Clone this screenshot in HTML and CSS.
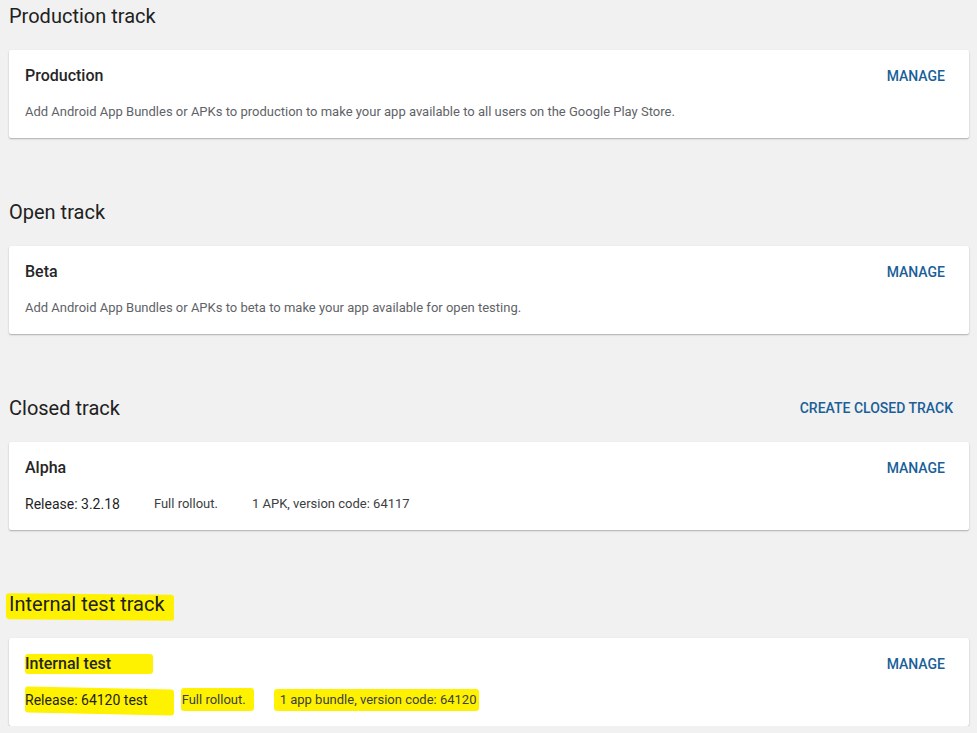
FILE: index.html
```html
<!DOCTYPE html>
<html>
<head>
<meta charset="utf-8">
<link rel="stylesheet" href="styles.css">
</head>
<body>
<main class="page">
  <section class="track">
    <div class="track-head">
      <h2 class="track-title">Production track</h2>
    </div>
    <div class="card">
      <div class="card-row">
        <h3 class="card-title">Production</h3>
        <a class="btn btn-manage">MANAGE</a>
      </div>
      <p class="card-desc">Add Android App Bundles or APKs to production to make your app available to all users on the Google Play Store.</p>
    </div>
  </section>

  <section class="track">
    <div class="track-head">
      <h2 class="track-title">Open track</h2>
    </div>
    <div class="card">
      <div class="card-row">
        <h3 class="card-title">Beta</h3>
        <a class="btn btn-manage">MANAGE</a>
      </div>
      <p class="card-desc">Add Android App Bundles or APKs to beta to make your app available for open testing.</p>
    </div>
  </section>

  <section class="track">
    <div class="track-head">
      <h2 class="track-title">Closed track</h2>
      <a class="btn btn-create">CREATE CLOSED TRACK</a>
    </div>
    <div class="card">
      <div class="card-row">
        <h3 class="card-title">Alpha</h3>
        <a class="btn btn-manage">MANAGE</a>
      </div>
      <div class="release">
        <span class="rel-name">Release: 3.2.18</span>
        <span class="rel-info">Full rollout.</span>
        <span class="rel-info">1 APK, version code: 64117</span>
      </div>
    </div>
  </section>

  <section class="track">
    <div class="track-head">
      <h2 class="track-title"><span class="hl hl-heading">Internal test track</span></h2>
    </div>
    <div class="card">
      <div class="card-row">
        <h3 class="card-title"><span class="hl hl-title">Internal test</span></h3>
        <a class="btn btn-manage">MANAGE</a>
      </div>
      <div class="release">
        <span class="rel-name hl hl-release">Release: 64120 test</span>
        <span class="rel-info hl hl-rollout">Full rollout.</span>
        <span class="rel-info hl hl-bundle">1 app bundle, version code: 64120</span>
      </div>
    </div>
  </section>
</main>
</body>
</html>
```

FILE: styles.css
```css
html, body {
  margin: 0;
  padding: 0;
  background: #f1f1f1;
}

body {
  font-family: Roboto, "Liberation Sans", Arial, sans-serif;
  color: #202124;
}

.page {
  width: 960px;
  padding-left: 9px;
}

.track {
  margin-bottom: 58px;
}

.track:last-child {
  margin-bottom: 0;
}

.track-head {
  display: flex;
  align-items: center;
  justify-content: space-between;
  height: 32px;
  margin-bottom: 18px;
}

.track-title {
  margin: 0;
  font-size: 20px;
  font-weight: 400;
  line-height: 32px;
  color: #212121;
}

.card {
  background: #ffffff;
  border-radius: 2px;
  box-shadow: 0 1px 2px rgba(0, 0, 0, 0.22), 0 1px 1px rgba(0, 0, 0, 0.08);
  padding: 14px 16px 16px 16px;
}

.card-row {
  display: flex;
  align-items: center;
  justify-content: space-between;
  height: 24px;
}

.card-title {
  margin: 0;
  font-size: 16px;
  font-weight: 500;
  line-height: 24px;
  color: #262626;
}

.btn {
  font-size: 14px;
  font-weight: 500;
  letter-spacing: 0;
  color: #1a5f98;
  text-decoration: none;
  line-height: 24px;
}

.btn-manage {
  padding-right: 8px;
}

.btn-create {
  padding-right: 16px;
}

.card-desc {
  margin: 14px 0 0 0;
  font-size: 13px;
  line-height: 20px;
  color: #5f6368;
}

.release {
  display: flex;
  align-items: center;
  gap: 34px;
  margin-top: 14px;
  height: 20px;
}

.rel-name {
  font-size: 14px;
  line-height: 20px;
  color: #1f1f1f;
}

.rel-info {
  font-size: 13px;
  line-height: 20px;
  color: #3c4043;
}

/* marker highlights drawn over the screenshot */
.hl {
  position: relative;
  z-index: 0;
}

.hl::before {
  content: "";
  position: absolute;
  z-index: -1;
  background: #fff200;
  border-radius: 3px;
}

.hl-heading::before {
  left: -3px;
  right: -9px;
  top: 2px;
  bottom: -4px;
  transform: skewY(0.6deg);
}

.hl-title::before {
  left: 0;
  right: -42px;
  top: 0;
  bottom: -1px;
}

.hl-release::before {
  left: 0;
  right: -26px;
  top: -2px;
  bottom: -4px;
  transform: skewY(1.2deg);
}

.hl-rollout::before {
  left: -1px;
  right: -8px;
  top: -2px;
  bottom: -1px;
}

.hl-bundle::before {
  left: -6px;
  right: -3px;
  top: -1px;
  bottom: -1px;
}
```
